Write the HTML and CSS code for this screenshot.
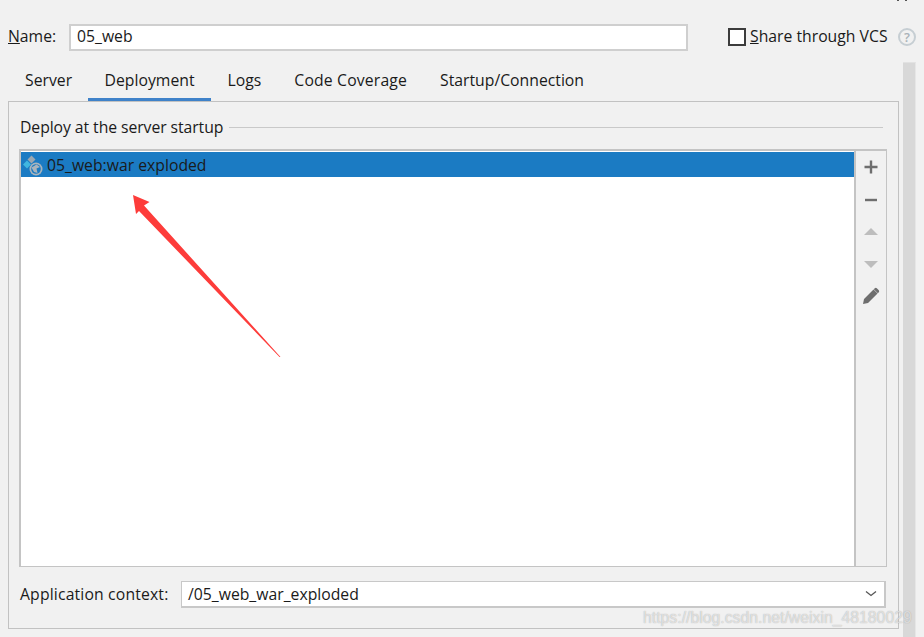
FILE: index.html
```html
<!DOCTYPE html>
<html lang="en">
<head>
<meta charset="utf-8">
<title>Run configuration - Deployment</title>
<link rel="stylesheet" href="styles.css">
</head>
<body>
<div class="dialog">
  <div class="corner-mark"><i></i><i></i></div>
  <div class="name-row">
    <label class="name-label"><u>N</u>ame:</label>
    <div class="name-input">05_web</div>
    <div class="vcs-box"></div>
    <span class="vcs-label"><u>S</u>hare through VCS</span>
    <span class="help">?</span>
  </div>
  <div class="main">
    <div class="content">
      <nav class="tabs">
        <span class="tab">Server</span>
        <span class="tab active">Deployment</span>
        <span class="tab">Logs</span>
        <span class="tab tab-wide">Code Coverage</span>
        <span class="tab">Startup/Connection</span>
      </nav>
      <section class="panel">
        <div class="group-title"><span>Deploy at the server startup</span><div class="rule"></div></div>
        <div class="list-box">
          <div class="list">
            <div class="row">
              <svg class="artifact" width="22" height="22" viewBox="0 0 22 22">
                <path d="M9.500 1.500 L13.500 5.500 L9.500 9.500 L5.500 5.500Z" fill="#9aa7b1"/>
                <path d="M5 6.500 L9 10.500 L5 14.500 L1 10.500Z" fill="#40b6e0"/>
                <circle cx="14" cy="15" r="6.500" fill="#a9b4bc"/>
                <circle cx="14" cy="15" r="4.800" fill="#1b7bc3"/>
                <path d="M9.500 13.500 L14.500 10.500 L18 13 L14.500 14.500 L15.500 19 L12 18Z" fill="#a9b4bc"/>
              </svg>
              <span>05_web:war exploded</span>
            </div>
          </div>
          <div class="toolbar">
            <svg class="tool tool-first" width="16" height="16" viewBox="0 0 16 16"><path d="M6.800 1.500h2.400v5.300h5.300v2.400H9.200v5.300H6.800V9.200H1.500V6.800h5.300z" fill="#6e6e6e"/></svg>
            <svg class="tool" width="16" height="16" viewBox="0 0 16 16"><path d="M2 6.800h12v2.400H2z" fill="#6e6e6e"/></svg>
            <svg class="tool" width="16" height="16" viewBox="0 0 16 16"><path d="M8 4l7 7H1z" fill="#bdbdbd"/></svg>
            <svg class="tool" width="16" height="16" viewBox="0 0 16 16"><path d="M1 5h14l-7 7z" fill="#bdbdbd"/></svg>
            <svg class="tool tool-last" width="18" height="18" viewBox="0 0 18 18"><path d="M1 17l1-5L11.500 2.500l4 4L6 16zM12.800 1.200q1-.8 2 0l2 2q.8 1 0 2l-1 1-4-4z" fill="#6e6e6e"/></svg>
          </div>
        </div>
        <div class="context-row">
          <span class="context-label">Application context:</span>
          <div class="context-select">
            <span>/05_web_war_exploded</span>
            <svg width="12" height="8" viewBox="0 0 12 8"><path d="M1 1.500l5 4 5-4" fill="none" stroke="#555" stroke-width="1.300"/></svg>
          </div>
        </div>
      </section>
    </div>
    <div class="scrollbar"></div>
  </div>
  <div class="watermark">https://blog.csdn.net/weixin_48180029</div>
  <svg class="arrow" width="170" height="180" viewBox="120 185 170 180">
    <path d="M133 195 L149.500 202 L144 205.500 L280.500 357 L279.500 357 L139 211 L136 214Z" fill="#fd3c3a"/>
  </svg>
</div>
</body>
</html>
```

FILE: styles.css
```css
* { box-sizing: border-box; }
html, body { margin: 0; padding: 0; }
body {
  width: 924px;
  height: 637px;
  overflow: hidden;
  background: #f1f1f1;
  color: #1a1a1a;
  font-family: "Open Sans", "Noto Sans", sans-serif;
  font-size: 15.750px;
}
.dialog {
  position: relative;
  width: 924px;
  height: 637px;
  padding-top: 24px;
  overflow: hidden;
}
.corner-mark { position: absolute; top: 0; left: 897px; display: flex; gap: 6px; }
.corner-mark i { display: block; width: 2px; height: 1px; background: #555; }
.name-row {
  display: flex;
  align-items: center;
  height: 26px;
  padding-left: 8px;
  line-height: 24px;
}
.name-label { width: 61px; margin-top: -2px; }
.name-input {
  width: 619px;
  height: 27px;
  padding-left: 6px;
  line-height: 21px;
  background: #fff;
  border: 2px solid #cfcfcf;
}
.vcs-box {
  width: 18px;
  height: 18px;
  margin-left: 40px;
  background: #fff;
  border: 2px solid #3c3c3c;
}
.vcs-label { margin-left: 4px; width: 148px; white-space: nowrap; margin-top: -2px; }
.help {
  display: flex;
  align-items: center;
  justify-content: center;
  width: 18px;
  height: 18px;
  border: 2px solid #c6ced3;
  border-radius: 50%;
  color: #a9b2b8;
  font-size: 13px;
  font-weight: 600;
}
.main {
  display: flex;
  height: 575px;
  margin-top: 12px;
  padding-left: 8px;
}
.content { width: 891px; display: flex; flex-direction: column; }
.tabs { display: flex; height: 39px; }
.tab {
  height: 39px;
  padding: 6px 16.500px 0;
  white-space: nowrap;
  line-height: 24px;
}
.tab:first-child { padding-left: 17px; padding-right: 16px; }
.tab.active { border-bottom: 3px solid #3f82c9; }
.tab-wide { letter-spacing: .16px; }
.panel {
  width: 891px;
  height: 528px;
  padding: 13px 11px 0;
  border: 1px solid #c2c2c2;
}
.group-title { display: flex; align-items: center; height: 24px; }
.group-title span { white-space: nowrap; letter-spacing: -.07px; }
.rule { flex: 1; height: 1px; margin: 0 4px 0 6px; background: #c9c9c9; }
.list-box {
  display: flex;
  height: 418px;
  width: 868px;
  margin-top: 10px;
  border: 2px solid #c4c4c4;
  border-right-width: 1px;
  border-bottom-width: 1px;
  margin-left: -1px;
}
.list { width: 833px; background: #fff; padding-top: 1px; }
.row {
  display: flex;
  align-items: center;
  gap: 3px;
  height: 25px;
  padding-left: 1px;
  background: #1b7bc3;
  white-space: nowrap;
  line-height: 24px;
}
.artifact { flex: none; }
.toolbar {
  flex: 1;
  display: flex;
  flex-direction: column;
  align-items: center;
  gap: 16px;
  padding-top: 8px;
  border-left: 2px solid #c4c4c4;
}
.tool-first { margin-bottom: 1px; }
.tool-last { margin-top: -1px; }
.context-row { display: flex; align-items: center; margin-top: 14px; height: 27px; }
.context-label { width: 161px; white-space: nowrap; letter-spacing: .15px; margin-top: -1px; }
.context-select {
  display: flex;
  align-items: center;
  justify-content: space-between;
  width: 705px;
  height: 27px;
  padding: 0 7px 0 6px;
  background: #fff;
  border: 1px solid #c8c8c8;
  border-width: 1px 2px 2px 1px;
  line-height: 21px;
}
.scrollbar {
  width: 13px;
  height: 575px;
  margin-left: 4px;
  background: #d8d8d8;
  border-right: 1px solid #e6e6e6;
  border-top: 1px solid #e2e2e2;
}
.watermark {
  position: absolute;
  left: 643px;
  top: 609px;
  font-family: "Liberation Sans", sans-serif;
  font-size: 15.800px;
  white-space: nowrap;
  color: rgba(255, 255, 255, .6);
  text-shadow: 0 0 1px rgba(110, 110, 110, .6);
}
.arrow { position: absolute; left: 120px; top: 185px; }
```
